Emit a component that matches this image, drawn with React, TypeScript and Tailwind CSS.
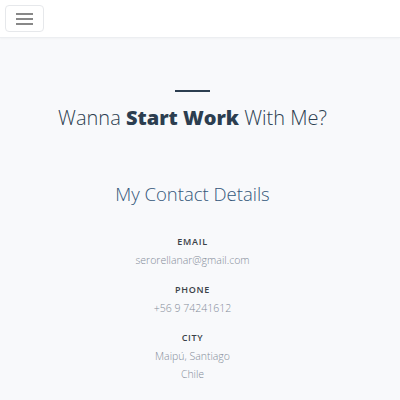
function Item({ label, children }: { label: string; children: React.ReactNode }) {
  return (
    <div className="flex flex-col items-center">
      <h4 className="text-[9px] font-semibold tracking-[0.08em] uppercase text-[#3a4148] leading-[14px]">{label}</h4>
      <p className="mt-[2px] text-[10.5px] font-light text-[#848c99] leading-[18px] text-center">{children}</p>
    </div>
  );
}

export default function App() {
  return (
    <div className="min-h-[400px] bg-[#f8f9fb]" style={{ fontFamily: '"Open Sans", "Noto Sans", sans-serif' }}>
      {/* Navbar */}
      <nav className="h-[38px] bg-white border-b border-[#eceef1] shadow-[0_1px_2px_rgba(0,0,0,0.03)] px-[5px] pt-[5px]">
        <button className="w-[39px] h-[27px] border border-[#e6e8eb] rounded-[4px] flex flex-col items-center justify-center gap-[3px]">
          <span className="block w-[17px] h-[2px] bg-[#888888]" />
          <span className="block w-[17px] h-[2px] bg-[#888888]" />
          <span className="block w-[17px] h-[2px] bg-[#888888]" />
        </button>
      </nav>

      <section className="flex flex-col items-center pt-[52px] pr-[15px]">
        <div className="w-[35px] h-[2px] bg-[#2c3e50]" />
        <h2 className="mt-[13px] text-[20px] font-light text-[#2c3e50] leading-[26px]">
          Wanna <span className="font-extrabold">Start Work</span> With Me?
        </h2>

        <h3 className="mt-[50px] text-[18.5px] font-light text-[#34577a] leading-[26px]">My Contact Details</h3>

        <div className="mt-[28px] flex flex-col gap-[14px]">
          <Item label="Email">serorellanar@gmail.com</Item>
          <Item label="Phone">+56 9 74241612</Item>
          <Item label="City">
            Maipú, Santiago
            <br />
            Chile
          </Item>
        </div>
      </section>
    </div>
  );
}
